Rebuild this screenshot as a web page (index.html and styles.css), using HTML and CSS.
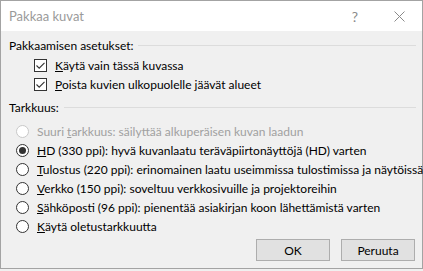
FILE: index.html
```html
<!DOCTYPE html>
<html lang="fi">

<head>
  <meta charset="UTF-8">
  <title>Pakkaa kuvat</title>
  <link rel="stylesheet" href="styles.css">
</head>

<body>
  <div class="window">
    <div class="titlebar">
      <span class="title">Pakkaa kuvat</span>
      <span class="help">?</span>
      <svg class="close" width="11" height="11" viewBox="0 0 11 11">
        <path d="M0.5 0.5 L10.5 10.5 M10.5 0.5 L0.5 10.5" stroke="#8a8a8a" stroke-width="1" fill="none" />
      </svg>
    </div>

    <div class="content">
      <div class="group-head">
        <span>Pakkaamisen asetukset:</span>
        <div class="rule"></div>
      </div>
      <div class="checks">
        <div class="row">
          <svg class="box" width="13" height="13" viewBox="0 0 13 13">
            <rect x="0.5" y="0.5" width="12" height="12" fill="#fff" stroke="#333" />
            <path d="M2.5 6.5 L5.2 9.2 L10.5 3.8" stroke="#333" stroke-width="1.1" fill="none" />
          </svg>
          <span><u>K</u>äytä vain tässä kuvassa</span>
        </div>
        <div class="row">
          <svg class="box" width="13" height="13" viewBox="0 0 13 13">
            <rect x="0.5" y="0.5" width="12" height="12" fill="#fff" stroke="#333" />
            <path d="M2.5 6.5 L5.2 9.2 L10.5 3.8" stroke="#333" stroke-width="1.1" fill="none" />
          </svg>
          <span><u>P</u>oista kuvien ulkopuolelle jäävät alueet</span>
        </div>
      </div>

      <div class="group-head second">
        <span>Tarkkuus:</span>
        <div class="rule"></div>
      </div>
      <div class="radios">
        <div class="row disabled">
          <svg class="radio" width="13" height="13" viewBox="0 0 13 13">
            <circle cx="6.5" cy="6.5" r="6" fill="#fff" stroke="#c8c8c8" />
          </svg>
          <span>Suuri <u>t</u>arkkuus: säilyttää alkuperäisen kuvan laadun</span>
        </div>
        <div class="row">
          <svg class="radio" width="13" height="13" viewBox="0 0 13 13">
            <circle cx="6.5" cy="6.5" r="6" fill="#fff" stroke="#333" />
            <circle cx="6.5" cy="6.5" r="3.5" fill="#333" />
          </svg>
          <span><u>H</u>D (330 ppi): hyvä kuvanlaatu teräväpiirtonäyttöjä (HD) varten</span>
        </div>
        <div class="row">
          <svg class="radio" width="13" height="13" viewBox="0 0 13 13">
            <circle cx="6.5" cy="6.5" r="6" fill="#fff" stroke="#333" />
          </svg>
          <span><u>T</u>ulostus (220 ppi): erinomainen laatu useimmissa tulostimissa ja näytöissä</span>
        </div>
        <div class="row">
          <svg class="radio" width="13" height="13" viewBox="0 0 13 13">
            <circle cx="6.5" cy="6.5" r="6" fill="#fff" stroke="#333" />
          </svg>
          <span><u>V</u>erkko (150 ppi): soveltuu verkkosivuille ja projektoreihin</span>
        </div>
        <div class="row">
          <svg class="radio" width="13" height="13" viewBox="0 0 13 13">
            <circle cx="6.5" cy="6.5" r="6" fill="#fff" stroke="#333" />
          </svg>
          <span><u>S</u>ähköposti (96 ppi): pienentää asiakirjan koon lähettämistä varten</span>
        </div>
        <div class="row">
          <svg class="radio" width="13" height="13" viewBox="0 0 13 13">
            <circle cx="6.5" cy="6.5" r="6" fill="#fff" stroke="#333" />
          </svg>
          <span><u>K</u>äytä oletustarkkuutta</span>
        </div>
      </div>

      <div class="buttons">
        <button class="btn">OK</button>
        <button class="btn">Peruuta</button>
      </div>
    </div>
  </div>
</body>

</html>
```

FILE: styles.css
```css
body {
  margin: 0;
  background-color: #f0f0f0;
  font-family: Lato, "Noto Sans", sans-serif;
  font-size: 12px;
  color: #000;
}

.window {
  box-sizing: border-box;
  width: 423px;
  height: 269px;
  border: 1px solid #a3a3a3;
  background-color: #f0f0f0;
}

.titlebar {
  height: 30px;
  background-color: #fff;
  display: flex;
  align-items: center;
}

.title {
  margin-left: 8px;
  font-size: 13px;
  color: #9a9a9a;
  flex: 1;
}

.help {
  font-size: 14px;
  color: #8a8a8a;
  margin-right: 36px;
}

.close {
  margin-right: 17px;
}

.content {
  padding: 5px 6px 0 8px;
}

.group-head {
  height: 19px;
  display: flex;
  align-items: center;
}

.group-head.second {
  margin-top: 4px;
}

.rule {
  flex: 1;
  height: 1px;
  margin-left: 5px;
  background-color: #dcdcdc;
}

.row {
  height: 19px;
  display: flex;
  align-items: center;
  white-space: nowrap;
}

.row svg {
  flex-shrink: 0;
}

.checks {
  margin-top: 1px;
  padding-left: 25px;
}

.checks .box {
  margin-right: 8px;
}

.radios {
  margin-top: 5px;
  padding-left: 7px;
}

.radios .radio {
  margin-right: 8px;
}

.disabled {
  color: #a0a0a0;
}

.buttons {
  margin-top: 3px;
  display: flex;
  justify-content: flex-end;
  gap: 11px;
  padding-right: 1px;
}

.btn {
  width: 74px;
  height: 22px;
  background-color: #e1e1e1;
  border: 1px solid #adadad;
  font-family: inherit;
  font-size: 12px;
  color: #000;
  padding: 0;
}
```
